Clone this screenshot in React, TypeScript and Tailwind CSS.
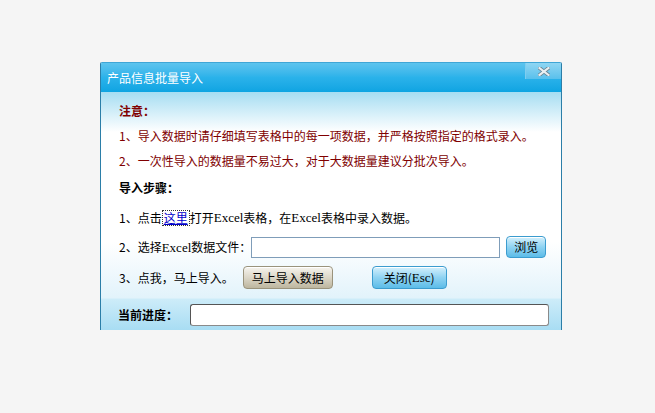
import React from "react";

const cjk = { fontFamily: '"SimSun","Noto Sans CJK SC",sans-serif' };

function Latin({ children }: { children: React.ReactNode }) {
  return (
    <span className="text-[13px] font-[family-name:'Liberation_Serif',serif]">{children}</span>
  );
}

export default function App() {
  return (
    <div className="w-[655px] h-[413px] bg-[#f5f5f5] overflow-hidden pt-[62px] pl-[100px]" style={cjk}>
      <div className="w-[462px] h-[268px] border-x border-[#2b7ea8] flex flex-col overflow-hidden text-[12px] leading-none rounded-t-[2px]">
        {/* title bar */}
        <div className="h-[30px] flex items-start justify-between bg-gradient-to-b from-[#5cc4ee] via-[#2ab2ea] to-[#0da4e2] border-t border-[#3fa6d6]">
          <span className="text-white text-[12px] pl-[6px] pt-[9px]">产品信息批量导入</span>
          <div className="w-[36px] h-[16px] border-l border-[#7fcdef] bg-gradient-to-b from-[#8fd6f3] to-[#58c0ec] flex items-center justify-center">
            <svg width="12" height="9" viewBox="0 0 12 9">
              <path d="M1.5 1 L10.5 8 M10.5 1 L1.5 8" stroke="#6a8594" strokeWidth="3.8" strokeLinecap="square" />
              <path d="M1.5 1 L10.5 8 M10.5 1 L1.5 8" stroke="#e9eff2" strokeWidth="2.2" strokeLinecap="square" />
            </svg>
          </div>
        </div>
        {/* body */}
        <div className="flex-1 flex flex-col pl-[18px] pt-[6px] [background-image:linear-gradient(to_bottom,#a6ddf2_0px,#ffffff_40px,#ffffff_150px,#e2f3fb_206px)]">
          <div className="h-[25px] flex items-center font-bold text-[#800000]">注意：</div>
          <div className="h-[25px] flex items-center text-[#800000]">1、导入数据时请仔细填写表格中的每一项数据，并严格按照指定的格式录入。</div>
          <div className="h-[25px] flex items-center text-[#800000]">2、一次性导入的数据量不易过大，对于大数据量建议分批次导入。</div>
          <div className="h-[30px] flex items-center font-bold text-black">导入步骤：</div>
          <div className="h-[29px] flex items-center text-black">
            1、点击
            <span className="text-[#0000cc] underline border border-dotted border-[#333] px-[1px] leading-[14px]">这里</span>
            打开<Latin>Excel</Latin>表格，在<Latin>Excel</Latin>表格中录入数据。
          </div>
          <div className="h-[30px] flex items-center text-black">
            2、选择<Latin>Excel</Latin>数据文件：
            <div className="w-[249px] h-[21px] border border-[#7f9db9] bg-white" />
            <button className="ml-[6px] w-[40px] h-[22px] rounded-[4px] border border-[#3b9ccf] bg-gradient-to-b from-[#d4f0fc] via-[#8fd3f2] to-[#5bbce8] text-[12px] text-black flex items-center justify-center shadow-[inset_0_1px_0_#ffffff]" style={cjk}>
              浏览
            </button>
          </div>
          <div className="h-[31px] flex items-center text-black">
            3、点我，马上导入。
            <button className="ml-[9px] w-[90px] h-[23px] rounded-[4px] border border-[#9a937c] bg-gradient-to-b from-[#f6f4ee] via-[#dcd7c8] to-[#bdb69f] text-[12px] text-black flex items-center justify-center shadow-[inset_0_1px_0_#ffffff]" style={cjk}>
              马上导入数据
            </button>
            <button className="ml-[39px] w-[75px] h-[23px] rounded-[4px] border border-[#3b9ccf] bg-gradient-to-b from-[#d4f0fc] via-[#8fd3f2] to-[#5bbce8] text-[12px] text-black flex items-center justify-center shadow-[inset_0_1px_0_#ffffff]" style={cjk}>
              关闭(<Latin>Esc</Latin>)
            </button>
          </div>
        </div>
        {/* progress */}
        <div className="h-[32px] flex items-center pl-[17px] bg-gradient-to-b from-[#cdecf9] to-[#a8ddf3] border-t border-[#d8f0fa]">
          <span className="font-bold text-black w-[72px]">当前进度：</span>
          <div className="w-[359px] h-[22px] bg-white rounded-[3px] border border-[#8a8a8a] border-t-[#555] border-l-[#555]" />
        </div>
      </div>
    </div>
  );
}
